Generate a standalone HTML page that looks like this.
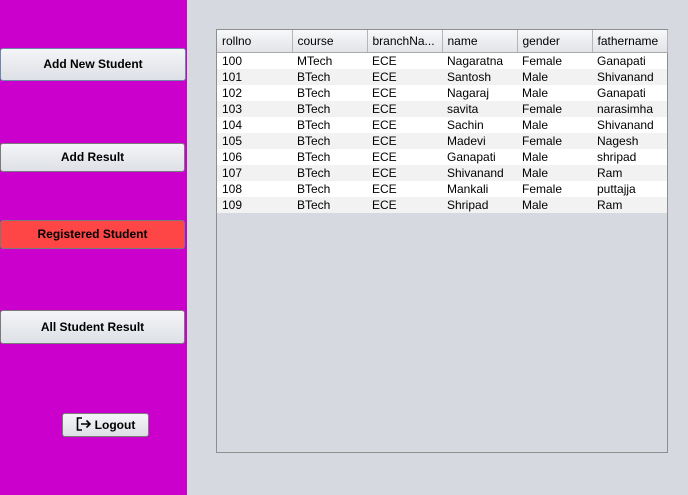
<!DOCTYPE html><html><head><style>
body{margin:0;width:688px;height:495px;background:#d6d9df;position:relative;overflow:hidden;font-family:"Liberation Sans",sans-serif}
#side{position:absolute;left:0;top:0;width:187px;height:495px;background:#cc00cc}
.b{position:absolute;left:0;width:183px;border:1px solid #7a7a7a;border-radius:3px;background:linear-gradient(#f4f5f7,#dde0e6);font-weight:bold;font-size:12px;text-align:center;box-sizing:border-box;color:#000}
#t{position:absolute;left:216px;top:29px;width:452px;height:424px;border:1px solid #8e8e8e;background:#d6d9df;box-sizing:border-box}
table{border-collapse:collapse;font-size:12px;width:450px;table-layout:fixed}
th{height:22px;font-weight:normal;text-align:left;padding:0 0 0 5px;background:linear-gradient(#f7f8fa,#e2e4e8);border-right:1px solid #b5b5b5;border-bottom:1px solid #a9a9a9;white-space:nowrap;overflow:hidden}
td{height:16px;padding:0 0 0 5px;white-space:nowrap}
tr:nth-child(odd) td{background:#fff}tr:nth-child(even) td{background:#f2f2f2}
</style></head><body>
<div id="side"></div>
<div class="b" style="top:48px;height:33px;line-height:31px;width:186px;border-color:#6f88aa">Add New Student</div>
<div class="b" style="top:143px;height:29px;line-height:27px;width:185px">Add Result</div>
<div class="b" style="top:220px;height:29px;line-height:27px;width:185px;background:#ff4646">Registered Student</div>
<div class="b" style="top:310px;height:34px;line-height:32px;width:185px">All Student Result</div>
<div class="b" style="left:62px;top:413px;width:87px;height:24px;line-height:22px"><svg width="16" height="14" viewBox="0 0 16 14" style="vertical-align:-2px;margin-right:3px"><path d="M6 1H1.5V13H6" fill="none" stroke="#000" stroke-width="1.6"/><path d="M5 7H14M10.5 3.5L14 7L10.5 10.5" fill="none" stroke="#000" stroke-width="1.6"/></svg>Logout</div>
<div id="t"><table>
<colgroup><col style="width:75px"><col style="width:75px"><col style="width:75px"><col style="width:75px"><col style="width:75px"><col style="width:75px"></colgroup>
<thead><tr><th>rollno</th><th>course</th><th>branchNa...</th><th>name</th><th>gender</th><th>fathername</th></tr></thead>
<tbody>
<tr><td>100</td><td>MTech</td><td>ECE</td><td>Nagaratna</td><td>Female</td><td>Ganapati</td></tr>
<tr><td>101</td><td>BTech</td><td>ECE</td><td>Santosh</td><td>Male</td><td>Shivanand</td></tr>
<tr><td>102</td><td>BTech</td><td>ECE</td><td>Nagaraj</td><td>Male</td><td>Ganapati</td></tr>
<tr><td>103</td><td>BTech</td><td>ECE</td><td>savita</td><td>Female</td><td>narasimha</td></tr>
<tr><td>104</td><td>BTech</td><td>ECE</td><td>Sachin</td><td>Male</td><td>Shivanand</td></tr>
<tr><td>105</td><td>BTech</td><td>ECE</td><td>Madevi</td><td>Female</td><td>Nagesh</td></tr>
<tr><td>106</td><td>BTech</td><td>ECE</td><td>Ganapati</td><td>Male</td><td>shripad</td></tr>
<tr><td>107</td><td>BTech</td><td>ECE</td><td>Shivanand</td><td>Male</td><td>Ram</td></tr>
<tr><td>108</td><td>BTech</td><td>ECE</td><td>Mankali</td><td>Female</td><td>puttajja</td></tr>
<tr><td>109</td><td>BTech</td><td>ECE</td><td>Shripad</td><td>Male</td><td>Ram</td></tr>
</tbody></table></div>
</body></html>
